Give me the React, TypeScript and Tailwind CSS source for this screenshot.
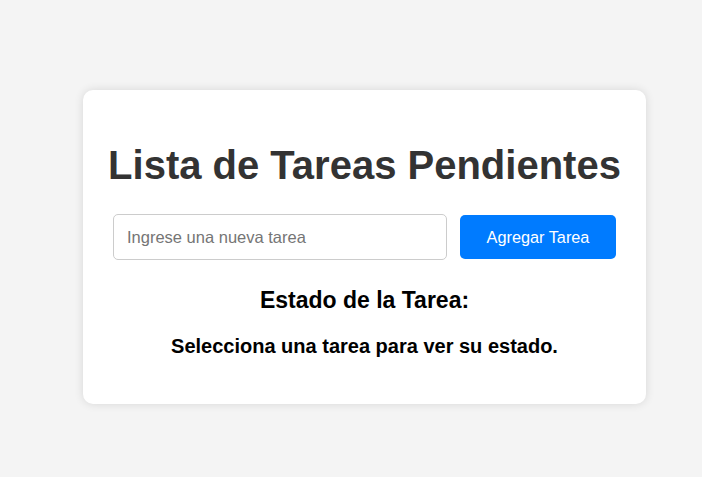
export default function App() {
  return (
    <div className="min-h-[477px] bg-[#f4f4f4] pl-[83px] pt-[90px] font-['Liberation_Sans',Arial,sans-serif]">
      <div className="w-[563px] rounded-[10px] bg-white px-[30px] pb-[46px] pt-[52px] shadow-[0_0_10px_rgba(0,0,0,0.12)]">
        <h1 className="-mx-[10px] whitespace-nowrap text-center text-[40px] font-bold leading-[46px] text-[#333]">
          Lista de Tareas Pendientes
        </h1>
        <div className="mt-[26px] flex items-center gap-[13px]">
          <input
            type="text"
            placeholder="Ingrese una nueva tarea"
            className="h-[46px] w-[334px] rounded-[5px] border border-[#ccc] px-[13px] text-[16.5px] text-[#333] outline-none placeholder:text-[#757575]"
          />
          <button className="h-[44px] w-[156px] rounded-[5px] bg-[#007bff] text-[16.3px] text-white">
            Agregar Tarea
          </button>
        </div>
        <div className="mt-[27px] text-center text-black">
          <h2 className="text-[23px] font-bold leading-[26px]">Estado de la Tarea:</h2>
          <p className="mt-[22px] text-[20px] font-bold leading-[23px]">
            Selecciona una tarea para ver su estado.
          </p>
        </div>
      </div>
    </div>
  );
}
